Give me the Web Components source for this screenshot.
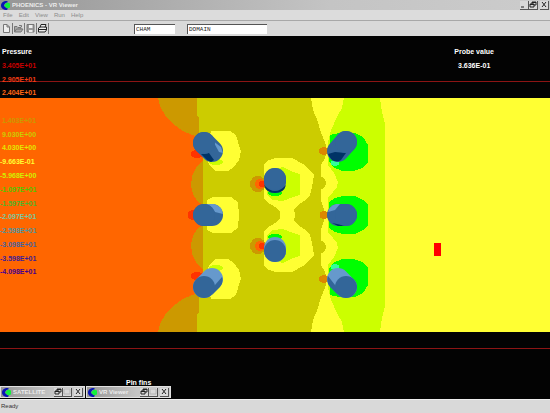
<!DOCTYPE html>
<html lang="en">
<head>
<meta charset="utf-8">
<title>PHOENICS - VR Viewer</title>
<style>
    body {
        margin: 0;
        font-family: "Liberation Sans", Arial, sans-serif;
        font-size: 6px;
        line-height: 8px;
        --face: #d9d9d9;
        --dim: #8c8c8c;
    }
</style>
</head>
<body>
<viewer-app></viewer-app>

<script>
class AppLogo extends HTMLElement {
    constructor() {
        super();
        this.attachShadow({ mode: 'open' });
    }

    connectedCallback() {
        this.shadowRoot.innerHTML = /*html*/`
            <style>
                :host { display: block; flex: none; width: 10px; height: 9px; }
                svg { display: block; width: 100%; height: 100%; }
            </style>
            <svg viewBox="0 0 10 9" aria-hidden="true">
                <path d="M6 0C2 0 0 2 0 4.500S2 9 6 9L7 7.500 4 6 3 4.500 4 2.500 7 1Z" fill="#0a14b4"/>
                <path d="M3 4.500 6 1.500 9 2.500V6.500L6 7.500Z" fill="#12f03c"/>
            </svg>
        `;
    }
}

class WindowButtons extends HTMLElement {
    constructor() {
        super();
        this.attachShadow({ mode: 'open' });
    }

    connectedCallback() {
        const glyphs = {
            min: ['Minimize', '<path d="M1 6h3"/>'],
            restore: ['Restore', '<path d="M3 3V1h4v3H5M1 3h4v3H1ZM1 3.500h4M3 1.500h4"/>'],
            max: ['Maximize', '<path d="M1 1h6v5H1Z" stroke="#b4b4b4"/>'],
            close: ['Close', '<path d="M2 1l4 5M6 1L2 6"/>']
        };
        const kinds = this.getAttribute('kinds').split(' ');
        this.shadowRoot.innerHTML = /*html*/`
            <style>
                :host { display: flex; flex: none; }
                button {
                    width: 9px;
                    height: 9px;
                    padding: 0;
                    border: 0 solid #555;
                    border-width: 0 1px 1px 0;
                    background: var(--face);
                }
                button:last-child { margin-left: 2px; }
                svg { display: block; width: 8px; height: 8px; fill: none; stroke: #222; }
            </style>
            ${kinds.map(k => `<button type="button" aria-label="${glyphs[k][0]}"><svg viewBox="0 0 8 8">${glyphs[k][1]}</svg></button>`).join('')}
        `;
    }
}

class TitleBar extends HTMLElement {
    constructor() {
        super();
        this.attachShadow({ mode: 'open' });
    }

    connectedCallback() {
        this.shadowRoot.innerHTML = /*html*/`
            <style>
                :host {
                    display: flex;
                    align-items: center;
                    gap: 1px;
                    height: 10px;
                    padding: 0 1px;
                    background: linear-gradient(90deg, #969696, #c4c4c4 60%, #cccccc);
                    color: #ececec;
                    font-weight: bold;
                }
                .title { flex: 1; overflow: hidden; white-space: nowrap; }
            </style>
            <app-logo></app-logo>
            <span class="title"><slot></slot></span>
            <window-buttons kinds="${this.getAttribute('kinds')}"></window-buttons>
        `;
    }
}

class MenuBar extends HTMLElement {
    constructor() {
        super();
        this.attachShadow({ mode: 'open' });
    }

    connectedCallback() {
        const items = ['File', 'Edit', 'View', 'Run', 'Help'];
        this.shadowRoot.innerHTML = /*html*/`
            <style>
                :host {
                    display: flex;
                    gap: 6px;
                    padding: 1px 3px;
                    background: #dcdcdc;
                    border-bottom: 1px solid #a8a8a8;
                }
                button {
                    padding: 0;
                    border: 0;
                    background: none;
                    color: var(--dim);
                    font: inherit;
                }
            </style>
            ${items.map(i => `<button type="button">${i}</button>`).join('')}
        `;
    }
}

class ToolBar extends HTMLElement {
    constructor() {
        super();
        this.attachShadow({ mode: 'open' });
    }

    connectedCallback() {
        this.shadowRoot.innerHTML = /*html*/`
            <style>
                :host {
                    display: flex;
                    align-items: center;
                    gap: 12px;
                    height: 15px;
                    padding-left: 1px;
                    background: var(--face);
                }
                .tools { display: flex; margin-right: 73px; }
                button {
                    width: 12px;
                    height: 11px;
                    padding: 0;
                    border: 0;
                    border-right: 1px solid #777;
                    background: none;
                }
                svg { display: block; width: 11px; height: 11px; fill: none; stroke: #777; }
                input {
                    box-sizing: border-box;
                    width: 41px;
                    height: 10px;
                    padding: 0 1px;
                    border: 0 solid #555;
                    border-width: 1px 0 0 1px;
                    background: #fff;
                    color: #222;
                    font: 6px "Liberation Mono", monospace;
                }
                input.wide { width: 80px; }
            </style>
            <div class="tools">
                <button type="button" aria-label="New"><svg viewBox="0 0 11 11"><path d="M2.500 1.500H6L8.500 4V9.500H2.500ZM6 1.500V4H8.500" fill="#eee"/></svg></button>
                <button type="button" aria-label="Open"><svg viewBox="0 0 11 11"><path d="M1.500 9V3.500H4L5 4.500H8V6M1.500 9L3.500 6H10L8 9ZM6 2.500H8.500V4" fill="#aaa"/></svg></button>
                <button type="button" aria-label="Save"><svg viewBox="0 0 11 11"><path d="M2 1.500H9V9H2Z" fill="#999"/><path d="M4 2H7.500V5H4ZM4 7H7.500V9H4Z" fill="#eee" stroke="none"/></svg></button>
                <button type="button" aria-label="Print"><svg viewBox="0 0 11 11"><path d="M3 4.500L4 1.500H9L8 4.500M1.500 5L3 4H9.500V7L8 9H1.500Z" fill="#eee" stroke="#222"/><path d="M2 6.500H9" stroke="#222"/></svg></button>
            </div>
            <input aria-label="Case" value="CHAM">
            <input class="wide" aria-label="Object" value="DOMAIN">
        `;
    }
}

class FlowPlot extends HTMLElement {
    constructor() {
        super();
        this.attachShadow({ mode: 'open' });
    }

    // Contours are symmetric about y = 215, so one half is mirrored for the other
    connectedCallback() {
        this.shadowRoot.innerHTML = /*html*/`
            <style>
                :host { display: block; min-height: 0; }
                svg { display: block; width: 100%; height: 100%; }
            </style>
            <svg viewBox="0 36 550 363" preserveAspectRatio="none" role="img" aria-label="Pressure contours around pin fins">
                <defs>
                    <g id="half" shape-rendering="crispEdges">
                        <path fill="#ff6600" d="M0 98H204V215.500H0Z"/>
                        <path fill="#cccc00" d="M197 98H330V215.500H203V156L199 150V127L197 115Z"/>
                        <path fill="#cc9900" d="M158 98H197V115L199 118V137L192 135 183 131 173 124 165 115 160 106Z"/>
                        <path fill="#cc9900" d="M203 160V205L197 201 193 194 191 186 192 176 197 166Z"/>
                        <path fill="#ffff33" d="M311 98H550V215.500H326L321 200V165L325 158 327 150 325 142 321 133 318 122 313 110Z"/>
                        <ellipse cx="318" cy="183" rx="8" ry="7" fill="#cccc00"/>
                        <path fill="#ccff00" d="M344 98H380L382 112 385 124V215.500H328V197L333 192 337 187 338 182 334 173 328 165V142L331 130 337 117 342 108Z"/>
                        <path fill="#ffff33" d="M211 131H230L236 135 238 142 241 151 239 160 234 167 228 171H216L209 165 206 150Z"/>
                        <ellipse cx="216" cy="162" rx="7" ry="3" fill="#ccff00"/>
                        <path fill="#ffff33" d="M207 200 213 197H231L238 202 239 215.500H207Z"/>
                        <path fill="#ffff33" d="M264 165 267 161 275 158H292L303 164 308 169 314 175 312 187 310 195 306 200 299 204 294 209 295 215.500H280V211L275 207 267 202 264 199Z"/>
                        <path fill="#ccff00" d="M267 172 283 167 293 172 300 174V195L293 197 283 201 273 200 267 195Z"/>
                        <ellipse cx="275" cy="193" rx="7" ry="3" fill="#00ff00"/>
                        <path fill="#00ff00" d="M330 135 339 133H355L363 137 368 145V162L362 168 353 171H342L333 167 329 161Z"/>
                        <path fill="#00ff00" d="M329 202 335 198 343 196H355L363 200 368 205V215.500H329Z"/>
                        <ellipse cx="335" cy="163" rx="4" ry="3" fill="#33ff99"/>
                        <ellipse cx="197" cy="154" rx="6" ry="4" fill="#ff3300"/>
                        <circle cx="258" cy="184" r="8" fill="#cc9900"/>
                        <circle cx="260" cy="184" r="5" fill="#ff6600"/>
                        <circle cx="262" cy="184" r="3" fill="#ff3300"/>
                        <ellipse cx="324" cy="151" rx="5" ry="4" fill="#dd8800"/>
                        <ellipse cx="324" cy="214" rx="4" ry="3" fill="#dd8800"/>
                        <ellipse cx="193" cy="214" rx="5" ry="4" fill="#ff3300"/>
                    </g>
                </defs>
                <rect y="36" width="550" height="363" fill="#030303"/>
                <path d="M0 81.500H550M0 348.500H550" stroke="#8c1414"/>
                <use href="#half"/>
                <use href="#half" transform="matrix(1 0 0 -1 0 430)"/>

                <g fill="none" stroke="#336699" stroke-width="22" stroke-linecap="round">
                    <path d="M204 143 212 151"/>
                    <path d="M204 215H212"/>
                    <path d="M204 287 212 279" stroke="#6699cc"/>
                    <path d="M275 179V182"/>
                    <path d="M275 251V248" stroke="#6699cc"/>
                    <path d="M346 142 338 151"/>
                    <path d="M346 215H338"/>
                    <path d="M346 287 338 279" stroke="#6699cc"/>
                </g>
                <g fill="#003366">
                    <path d="M201 154 209 153 214 160 211 162 207 160Z"/>
                    <path d="M264 185Q275 197 286 185 284 193 275 193 266 193 264 185Z"/>
                    <path d="M328 154 335 152 346 153 341 160Q333 165 328 154Z"/>
                    <path d="M332 223 337 224 346 226H338Z"/>
                </g>
                <g fill="#6699cc">
                    <path d="M213 141 221 147 223 153 219 152Z"/>
                    <path d="M206 204H214Q222 206 223 214L215 212Q212 206 206 204Z"/>
                    <path d="M340 204H336Q329 206 328 212L335 210Z"/>
                </g>
                <path fill="#336699" d="M212 295 220 287Q224 282 222 277L215 285ZM338 295 330 287Q326 282 328 276L335 285Z"/>
                <g fill="#336699">
                    <circle cx="204" cy="143" r="11"/>
                    <circle cx="204" cy="215" r="11"/>
                    <circle cx="204" cy="287" r="11"/>
                    <circle cx="275" cy="179" r="11"/>
                    <circle cx="275" cy="251" r="11"/>
                    <circle cx="346" cy="142" r="11"/>
                    <circle cx="346" cy="215" r="11"/>
                    <circle cx="346" cy="287" r="11"/>
                </g>
                <rect x="434" y="243" width="7" height="13" fill="#ff0000"/>
            </svg>
        `;
    }
}

class PressureLegend extends HTMLElement {
    constructor() {
        super();
        this.attachShadow({ mode: 'open' });
    }

    connectedCallback() {
        const levels = [
            ['3.405E+01', '#c80000'],
            ['2.905E+01', '#f03c14'],
            ['2.404E+01', '#ff6614'],
            null,
            ['1.403E+01', '#cc9900'],
            ['9.030E+00', '#cccc00'],
            ['4.030E+00', '#e6e600'],
            ['-9.663E-01', '#ffff33'],
            ['-5.968E+00', '#d2f000'],
            ['-1.097E+01', '#50c800'],
            ['-1.597E+01', '#50b428'],
            ['-2.097E+01', '#78c8a0'],
            ['-2.598E+01', '#5096a0'],
            ['-3.098E+01', '#4664a0'],
            ['-3.598E+01', '#3c1e96'],
            ['-4.098E+01', '#46008c']
        ];
        this.shadowRoot.innerHTML = /*html*/`
            <style>
                :host { display: flex; flex-direction: column; font-size: 7px; font-weight: bold; }
                h2 { margin: 0 0 0 2px; font: inherit; color: #fff; }
                ol {
                    display: grid;
                    grid-template-rows: repeat(16, 1fr);
                    flex: 1;
                    margin: 3px 0 0;
                    padding: 0;
                    list-style: none;
                }
                li { display: flex; align-items: center; padding-left: 2px; }
                li.neg { padding-left: 0; }
            </style>
            <h2>Pressure</h2>
            <ol>
                ${levels.map(l => l ? `<li class="${l[0][0] === '-' ? 'neg' : ''}" style="color:${l[1]}">${l[0]}</li>` : '<li aria-hidden="true"></li>').join('')}
            </ol>
        `;
    }
}

class ProbeReadout extends HTMLElement {
    constructor() {
        super();
        this.attachShadow({ mode: 'open' });
    }

    connectedCallback() {
        this.shadowRoot.innerHTML = /*html*/`
            <style>
                :host {
                    display: flex;
                    flex-direction: column;
                    align-items: center;
                    gap: 6px;
                    color: #fff;
                    font-size: 7px;
                    font-weight: bold;
                }
            </style>
            <span><slot name="label"></slot></span>
            <span><slot></slot></span>
        `;
    }
}

class ViewerApp extends HTMLElement {
    constructor() {
        super();
        this.attachShadow({ mode: 'open' });
    }

    connectedCallback() {
        this.shadowRoot.innerHTML = /*html*/`
            <style>
                :host {
                    display: flex;
                    flex-direction: column;
                    height: 100vh;
                    background: var(--face);
                }
                /* plot and readouts share one grid cell */
                main { display: grid; flex: 1; min-height: 0; grid-template: 100% / 100%; }
                main > * { grid-area: 1 / 1; }
                .readouts { display: flex; flex-direction: column; justify-content: space-between; }
                .top {
                    display: flex;
                    justify-content: space-between;
                    align-items: flex-start;
                    height: 67%;
                    padding: 12px 56px 0 0;
                    box-sizing: border-box;
                }
                pressure-legend { height: 100%; }
                .caption { margin: 0 0 -1px 126px; color: #fff; font-size: 7px; font-weight: bold; }
                .tasks { display: flex; gap: 1px; padding-bottom: 1px; }
                .tasks title-bar {
                    width: 81px;
                    border: 1px solid #e0e0e0;
                    position: relative;
                }
                footer {
                    height: 14px;
                    box-sizing: border-box;
                    padding: 2px 1px;
                    border-top: 1px solid #eee;
                    color: #333;
                }
            </style>
            <title-bar kinds="min restore close">PHOENICS - VR Viewer</title-bar>
            <menu-bar></menu-bar>
            <tool-bar></tool-bar>
            <main>
                <flow-plot></flow-plot>
                <div class="readouts">
                    <div class="top">
                        <pressure-legend></pressure-legend>
                        <probe-readout><span slot="label">Probe value</span>3.636E-01</probe-readout>
                    </div>
                    <div>
                        <div class="caption">Pin fins</div>
                        <div class="tasks">
                            <title-bar kinds="restore max close">SATELLITE</title-bar>
                            <title-bar kinds="restore max close">VR Viewer</title-bar>
                        </div>
                    </div>
                </div>
            </main>
            <footer>Ready</footer>
        `;
    }
}

customElements.define('app-logo', AppLogo);
customElements.define('window-buttons', WindowButtons);
customElements.define('title-bar', TitleBar);
customElements.define('menu-bar', MenuBar);
customElements.define('tool-bar', ToolBar);
customElements.define('flow-plot', FlowPlot);
customElements.define('pressure-legend', PressureLegend);
customElements.define('probe-readout', ProbeReadout);
customElements.define('viewer-app', ViewerApp);
</script>
</body>
</html>
